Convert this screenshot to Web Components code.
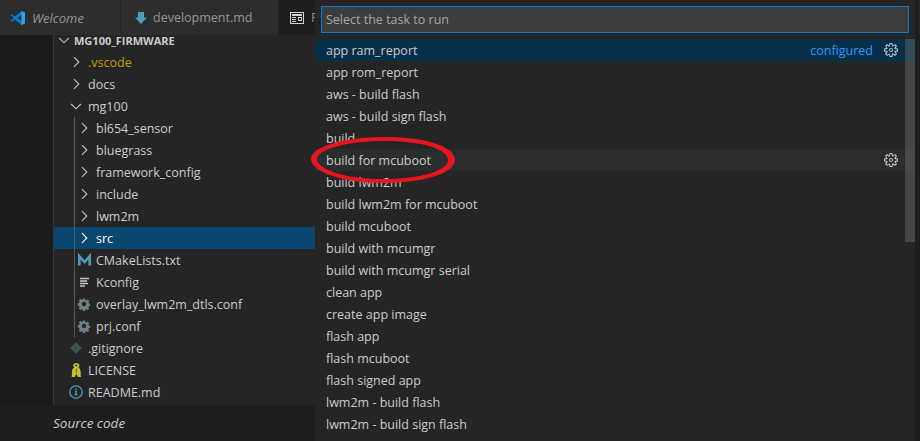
<!DOCTYPE html>
<html>
<head>
<meta charset="utf-8">
<style>
html, body { margin: 0; padding: 0; background: #1e1e1e; }
body { width: 920px; height: 441px; overflow: hidden; font: 12.5px "Open Sans", "Noto Sans", sans-serif; }
</style>
</head>
<body>
<vs-workbench>
  <vs-tabs slot="tabs">
    <vs-tab icon="vscode" italic width="121">Welcome</vs-tab>
    <vs-tab icon="markdown" width="158">development.md</vs-tab>
    <vs-tab icon="preview" active>P</vs-tab>
  </vs-tabs>
  <vs-tree slot="tree">
    <vs-row level="0" icon="down" bold>MG100_FIRMWARE</vs-row>
    <vs-row level="1" icon="right" color="#c09e00">.vscode</vs-row>
    <vs-row level="1" icon="right">docs</vs-row>
    <vs-row level="1" icon="down">mg100</vs-row>
    <vs-row level="2" icon="right">bl654_sensor</vs-row>
    <vs-row level="2" icon="right">bluegrass</vs-row>
    <vs-row level="2" icon="right">framework_config</vs-row>
    <vs-row level="2" icon="right">include</vs-row>
    <vs-row level="2" icon="right">lwm2m</vs-row>
    <vs-row level="2" icon="right" selected>src</vs-row>
    <vs-row level="2" icon="cmake">CMakeLists.txt</vs-row>
    <vs-row level="2" icon="lines">Kconfig</vs-row>
    <vs-row level="2" icon="cog">overlay_lwm2m_dtls.conf</vs-row>
    <vs-row level="2" icon="cog">prj.conf</vs-row>
    <vs-row level="1" icon="git">.gitignore</vs-row>
    <vs-row level="1" icon="key">LICENSE</vs-row>
    <vs-row level="1" icon="info">README.md</vs-row>
  </vs-tree>
  <span slot="footer">Source code</span>
  <quick-pick slot="overlay" placeholder="Select the task to run">
    <quick-item focused detail="configured">app ram_report</quick-item>
    <quick-item>app rom_report</quick-item>
    <quick-item>aws - build flash</quick-item>
    <quick-item>aws - build sign flash</quick-item>
    <quick-item>build</quick-item>
    <quick-item hovered>build for mcuboot</quick-item>
    <quick-item>build lwm2m</quick-item>
    <quick-item>build lwm2m for mcuboot</quick-item>
    <quick-item>build mcuboot</quick-item>
    <quick-item>build with mcumgr</quick-item>
    <quick-item>build with mcumgr serial</quick-item>
    <quick-item>clean app</quick-item>
    <quick-item>create app image</quick-item>
    <quick-item>flash app</quick-item>
    <quick-item>flash mcuboot</quick-item>
    <quick-item>flash signed app</quick-item>
    <quick-item>lwm2m - build flash</quick-item>
    <quick-item>lwm2m - build sign flash</quick-item>
  </quick-pick>
  <red-circle slot="overlay"></red-circle>
</vs-workbench>

<script>
const GEAR = 'M9.1 4.4L8.6 2H7.4l-.5 2.4-.7.3-2-1.3-.9.8 1.3 2-.2.7-2.4.5v1.2l2.4.5.3.8-1.3 2 .8.8 2-1.3.8.3.4 2.3h1.2l.5-2.4.8-.3 2 1.3.8-.8-1.3-2 .3-.8 2.3-.4V7.4l-2.4-.5-.3-.8 1.3-2-.8-.8-2 1.3-.7-.2zM9.4 1l.5 2.4L12 2.1l2 2-1.4 2.1 2.4.4v2.8l-2.4.5L14 12l-2 2-2.1-1.4-.5 2.4H6.6l-.5-2.4L4 13.9l-2-2 1.4-2.1L1 9.4V6.6l2.4-.5L2.1 4l2-2 2.1 1.4.4-2.4h2.8zm.6 7c0 1.1-.9 2-2 2s-2-.9-2-2 .9-2 2-2 2 .9 2 2zM8 9c.6 0 1-.4 1-1s-.4-1-1-1-1 .4-1 1 .4 1 1 1z';

const ICONS = {
  right: '<path d="M6 3.2L10.8 8 6 12.8" fill="none" stroke="#c5c5c5" stroke-width="1.1"/>',
  down: '<path d="M3.2 6L8 10.8 12.8 6" fill="none" stroke="#c5c5c5" stroke-width="1.1"/>',
  cmake: '<path d="M3.3 13.500V4.200L8.500 10l5.200-5.800V13.500" fill="none" stroke="#519aba" stroke-width="2.600"/>',
  lines: '<path d="M4 4.500h9M4 7h7M4 9.500h8M4 12h5" fill="none" stroke="#c5c5c5" stroke-width="1.300"/>',
  cog: '<path fill="#6d8086" fill-rule="evenodd" transform="translate(1.200 .8) scale(.85)" d="M6.800 2h2.400l.4 1.800 1.200.5 1.600-1 1.700 1.700-1 1.600.5 1.200 1.800.4v2.400l-1.800.4-.5 1.200 1 1.600-1.700 1.700-1.600-1-1.200.5-.4 1.800H6.800l-.4-1.800-1.200-.5-1.600 1-1.700-1.700 1-1.600-.5-1.200L.6 9.900V7.500l1.800-.4.5-1.200-1-1.600 1.700-1.700 1.600 1 1.200-.5zM8 5.900a2.600 2.600 0 100 5.200 2.600 2.600 0 000-5.200z"/>',
  git: '<path fill="#41535b" d="M8 2.200L13.800 8 8 13.800 2.200 8z"/><path fill="#2a3439" d="M6.600 6l1.600 1.600v3h-1V8z"/>',
  key: '<g transform="translate(-1.700 0) scale(1.250 1)"><path fill="#c4c432" fill-rule="evenodd" d="M8 1C6.500 1 5.500 2.100 5.500 3.500c0 .8.3 1.400.8 1.900C5.200 6.200 4.500 8 4.500 10c0 2 0 3.600-.3 5h2.600c.3-1 .6-2 1.200-3 .6 1 .9 2 1.200 3h2.600c-.4-1.400-.3-3-.3-5 0-2-.7-3.800-1.800-4.600.5-.5.8-1.100.8-1.900C10.500 2.100 9.500 1 8 1zm0 1.500a.9.9 0 110 1.800.9.9 0 010-1.800z"/><path fill="#5f8a2a" d="M7.500 6.500h1v5h-1z"/></g>',
  info: '<circle cx="8" cy="8" r="6.200" fill="none" stroke="#519aba" stroke-width="1.300"/><path fill="#519aba" d="M7.200 4.200h1.600v1.500H7.200zM6.800 6.800h2v3.500h.7v1H6.500v-1h.8V7.800h-.5z"/>',
  vscode: '<path fill="#0b7ad1" d="M11.500 1l3.500 1.700v10.600L11.500 15 5 9.500 2 11.800.8 11 3.800 8 .8 5 2 4.200 5 6.500zM11.500 4.800L7.500 8l4 3.200z"/><path fill="#2aa4f0" d="M11.500 1l3.500 1.700v10.600L11.500 15z"/>',
  markdown: '<path fill="#519aba" d="M5 2h6v5.500h3L8 14 2 7.500h3z"/>',
  preview: '<path fill="#d0d0d0" fill-rule="evenodd" d="M1 2h14v12H1zm1 1v10h12V3zm1 1h10v2H3zm0 3h4v1H3zm0 2h4v1H3zm0 2h4v1H3zm6-4h4v4H9zm1 1v2h2V8z"/>'
};

function iconSvg(name, size) {
  return `<svg width="${size}" height="${size}" viewBox="0 0 16 16">${ICONS[name] || ''}</svg>`;
}

class VsWorkbench extends HTMLElement {
  constructor() {
    super();
    this.attachShadow({mode: 'open'}).innerHTML = `
      <style>
        :host { display: grid; grid-template-rows: 35px 370px 36px; width: 920px; height: 441px; position: relative; overflow: hidden; background: #1e1e1e; }
        #middle { display: grid; grid-template-columns: 53px 1px 261px 1fr; background: #1e1e1e; min-height: 0; }
        #rail { background: #1c1c1c; }
        #line { background: #383838; }
        #side { background: #252526; overflow: hidden; }
        #footer { display: flex; align-items: center; padding-left: 53px; background: #1e1e1e; color: #cccccc; font-style: italic; font-size: 13.5px; }
      </style>
      <slot name="tabs"></slot>
      <div id="middle">
        <div id="rail"></div><div id="line"></div>
        <div id="side"><slot name="tree"></slot></div>
        <div></div>
      </div>
      <div id="footer"><slot name="footer"></slot></div>
      <slot name="overlay"></slot>`;
  }
}
customElements.define('vs-workbench', VsWorkbench);

class VsTabs extends HTMLElement {
  constructor() {
    super();
    this.attachShadow({mode: 'open'}).innerHTML = `
      <style>:host { display: flex; height: 35px; background: #252526; overflow: hidden; }</style>
      <slot></slot>`;
  }
}
customElements.define('vs-tabs', VsTabs);

class VsTab extends HTMLElement {
  constructor() {
    super();
    const active = this.hasAttribute('active');
    const name = this.getAttribute('icon');
    this.attachShadow({mode: 'open'}).innerHTML = `
      <style>
        :host { display: flex; align-items: center; box-sizing: border-box; height: 35px; flex: none; border-right: 1px solid #252526;
          background: ${active ? '#1e1e1e' : '#2d2d2d'}; color: ${active ? '#8a8f94' : '#969696'}; padding-left: 10px; }
        :host([active]) { flex: 1; }
        :host([italic]) { font-style: italic; font-size: 13px; }
        svg { flex: none; margin-right: 6px; }
        :host([icon="markdown"]) { padding-left: 12px; }
        :host([icon="markdown"]) svg { margin-right: 4px; }
        span { white-space: nowrap; }
      </style>
      ${iconSvg(name, 16)}<span><slot></slot></span>`;
    if (this.getAttribute('width')) this.style.width = this.getAttribute('width') + 'px';
  }
}
customElements.define('vs-tab', VsTab);

class VsTree extends HTMLElement {
  constructor() {
    super();
    this.attachShadow({mode: 'open'}).innerHTML = `
      <style>
        :host { display: block; position: relative; margin-top: -6px; }
        #guide { position: absolute; left: 20px; top: 88px; width: 1px; height: 220px; background: #585858; z-index: 1; }
      </style>
      <div id="guide"></div>
      <slot></slot>`;
  }
}
customElements.define('vs-tree', VsTree);

class VsRow extends HTMLElement {
  constructor() {
    super();
    const level = Number(this.getAttribute('level'));
    const name = this.getAttribute('icon');
    const iconLeft = [2, 14, 22][level];
    this.attachShadow({mode: 'open'}).innerHTML = `
      <style>
        :host { display: flex; align-items: center; height: 22px; color: ${this.getAttribute('color') || '#cccccc'}; padding-left: ${iconLeft}px; white-space: nowrap; }
        :host([selected]) { background: #094771; color: #ffffff; }
        :host([bold]) { font-weight: 700; font-size: 11px; }
        svg { flex: none; margin-right: ${level === 0 ? 2 : 4}px; }
        :host([selected]) path { stroke: #ffffff; }
      </style>
      ${iconSvg(name, 16)}<span><slot></slot></span>`;
  }
}
customElements.define('vs-row', VsRow);

class QuickPick extends HTMLElement {
  constructor() {
    super();
    this.attachShadow({mode: 'open'}).innerHTML = `
      <style>
        :host { display: block; position: absolute; left: 315px; top: 0; width: 600px; height: 441px; background: #252526; overflow: hidden; }
        #box { box-sizing: border-box; margin: 6px; height: 27px; padding-left: 4px; display: flex; align-items: center;
          background: #3c3c3c; border: 1px solid #007fd4; color: #a6a6a6; }
        #list { position: relative; }
        #bar { position: absolute; right: 0; top: 0; width: 10px; height: 203px; background: rgba(121,121,121,.4); }
      </style>
      <div id="box">${this.getAttribute('placeholder')}</div>
      <div id="list"><slot></slot><div id="bar"></div></div>`;
  }
}
customElements.define('quick-pick', QuickPick);

class QuickItem extends HTMLElement {
  constructor() {
    super();
    const detail = this.getAttribute('detail');
    const showGear = this.hasAttribute('focused') || this.hasAttribute('hovered');
    this.attachShadow({mode: 'open'}).innerHTML = `
      <style>
        :host { display: flex; align-items: center; height: 22px; padding: 0 16px 0 11px; color: #cccccc; white-space: nowrap; }
        :host([focused]) { background: #062f4a; }
        :host([hovered]) { background: #2a2d2e; }
        #label { flex: 1; }
        #detail { color: #3794ff; margin-right: 10px; }
        svg { flex: none; }
        path { fill: #c5c5c5; fill-rule: evenodd; }
      </style>
      <span id="label"><slot></slot></span>
      ${detail ? `<span id="detail">${detail}</span>` : ''}
      ${showGear ? `<svg width="16" height="16" viewBox="0 0 16 16"><path d="${GEAR}"/></svg>` : ''}`;
  }
}
customElements.define('quick-item', QuickItem);

class RedCircle extends HTMLElement {
  constructor() {
    super();
    this.attachShadow({mode: 'open'}).innerHTML = `
      <style>:host { display: block; position: absolute; left: 308px; top: 134px; width: 152px; height: 52px; pointer-events: none; }</style>
      <svg width="152" height="52" viewBox="0 0 152 52">
        <path fill="#e8141e" fill-rule="evenodd" d="M3 25C3 14 32 3 76 3c44 0 71 10 71 23S116 49 74 49C32 49 3 37 3 25zM9 25C9 35 36 45 74 45c38 0 66-8 66-19S114 7 76 7C38 7 9 16 9 25z"/>
      </svg>`;
  }
}
customElements.define('red-circle', RedCircle);
</script>
</body>
</html>
